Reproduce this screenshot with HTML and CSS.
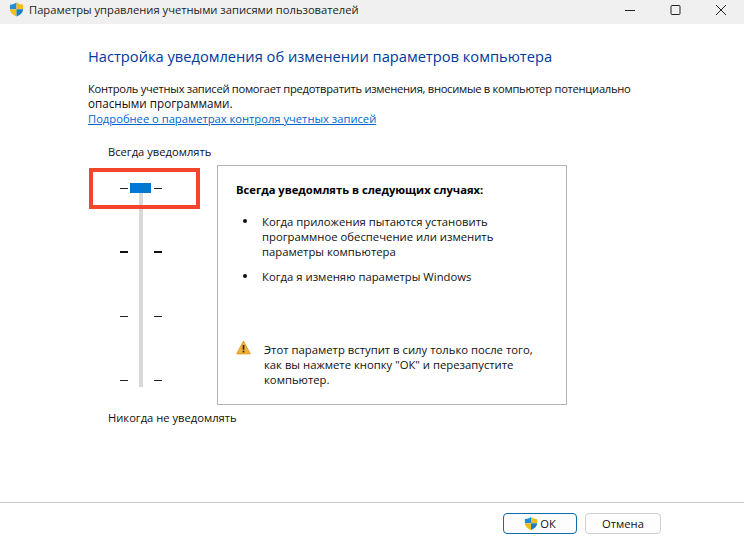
FILE: index.html
```html
<!DOCTYPE html>
<html lang="ru">
<head>
<meta charset="utf-8">
<title>Параметры управления учетными записями пользователей</title>
<link rel="stylesheet" href="styles.css">
</head>
<body>
<svg class="defs" width="0" height="0" aria-hidden="true">
  <symbol id="shield" viewBox="0 0 16 16">
    <path d="M8 .6C6 2 4 2.700 1 2.900v4.900h7V.6z" fill="#1c8fd6"/>
    <path d="M8 .6c2 1.400 4 2.100 7 2.300v4.900H8V.6z" fill="#f6bd1a"/>
    <path d="M1 7.800h7v7.600C3.800 13.900 1 11.300 1 7.800z" fill="#f6bd1a"/>
    <path d="M8 7.800h7c0 3.500-2.800 6.100-7 7.600V7.800z" fill="#1c7fc4"/>
  </symbol>
</svg>
<div class="window">
  <header class="titlebar">
    <svg class="title-icon"><use href="#shield"/></svg>
    <span class="title-text">Параметры управления учетными записями пользователей</span>
    <div class="controls">
      <svg class="ctl" viewBox="0 0 12 12"><path d="M0 6.500h10" /></svg>
      <svg class="ctl" viewBox="0 0 12 12"><rect x="1" y="1.500" width="9" height="9" rx="1"/></svg>
      <svg class="ctl" viewBox="0 0 12 12"><path d="M1 1l10 10M11 1L1 11"/></svg>
    </div>
  </header>
  <main class="content">
    <h1 class="heading">Настройка уведомления об изменении параметров компьютера</h1>
    <p class="intro"><span class="intro-first">Контроль учетных записей помогает предотвратить изменения, вносимые в компьютер потенциально</span> <span class="intro-second">опасными программами.</span></p>
    <a class="more" href="#">Подробнее о параметрах контроля учетных записей</a>
    <div class="settings">
      <div class="slider-col">
        <div class="slider-label top">Всегда уведомлять</div>
        <div class="slider">
          <div class="track"></div>
          <div class="thumb"></div>
          <div class="tick-row"><i></i><i></i></div>
          <div class="tick-row bold"><i></i><i></i></div>
          <div class="tick-row"><i></i><i></i></div>
          <div class="tick-row"><i></i><i></i></div>
        </div>
        <div class="slider-label bottom">Никогда не уведомлять</div>
      </div>
      <section class="panel">
        <h2 class="panel-title">Всегда уведомлять в следующих случаях:</h2>
        <ul class="panel-list">
          <li>Когда приложения пытаются установить программное обеспечение или изменить параметры компьютера</li>
          <li>Когда я изменяю параметры Windows</li>
        </ul>
        <div class="warning">
          <svg class="warn-icon" viewBox="0 0 16 16"><path d="M8 1.200 15.300 14.800H.7z" fill="#f2b035" stroke="#e09a20" stroke-linejoin="round"/><path d="M7.100 5.300h1.800v5.200H7.100zM7.100 11.500h1.800v1.700H7.100z" fill="#33291a"/></svg>
          <p>Этот параметр вступит в силу только после того, как вы нажмете кнопку "ОК" и перезапустите компьютер.</p>
        </div>
      </section>
    </div>
  </main>
  <footer class="footer">
    <button class="btn ok" type="button"><svg class="btn-icon"><use href="#shield"/></svg>ОК</button>
    <button class="btn" type="button">Отмена</button>
  </footer>
  <div class="highlight"></div>
</div>
</body>
</html>
```
FILE: styles.css
```css
* { box-sizing: border-box; }
html, body { margin: 0; padding: 0; }
body { font-family: "Open Sans", "Noto Sans", sans-serif; font-size: 11.200px; color: #111; background: #fff; }
.defs { position: absolute; }
.window { position: relative; width: 744px; height: 545px; display: flex; flex-direction: column; overflow: hidden; background: #fff; }
.titlebar { height: 24px; flex: none; background: #f0f0f0; display: flex; align-items: center; padding: 0 0 5px 9px; }
.title-icon { width: 15px; height: 15px; margin-right: 5px; }
.title-text { font-size: 11.200px; color: #222; flex: 1; white-space: nowrap; }
.controls { display: flex; width: 144px; padding-left: 25px; gap: 33px; align-items: center; }
.ctl { width: 12px; height: 12px; fill: none; stroke: #222; stroke-width: 1; }
.content { flex: 1; padding: 22px 0 0 88px; }
.heading { margin: 0 0 15px; font-size: 14.660px; font-weight: 400; line-height: 20px; color: #003a9b; white-space: nowrap; }
.intro { margin: 0; width: 600px; line-height: 15px; }
.intro-first { display: block; white-space: nowrap; letter-spacing: -0.29px; }
.intro-second { display: block; font-size: 11.700px; }
.more { display: block; line-height: 15px; color: #0066cc; }
.settings { display: flex; align-items: flex-start; margin-top: 18px; }
.slider-col { width: 109px; margin-left: 20px; flex: none; }
.slider-label { line-height: 15px; white-space: nowrap; }
.slider { position: relative; width: 42px; height: 198px; margin: 26px 0 0 12px; display: flex; flex-direction: column; justify-content: space-between; }
.track { position: absolute; left: 19px; top: 8px; width: 4px; height: 194px; background: #d9d9d9; }
.thumb { position: absolute; left: 10px; top: -2px; width: 21px; height: 10px; background: #0078d4; }
.tick-row { display: flex; justify-content: space-between; height: 6px; align-items: center; position: relative; }
.tick-row i { width: 8px; height: 1px; background: #222; }
.tick-row.bold i { height: 2px; background: #111; }
.slider-label.bottom { margin-top: 27px; }
.panel { width: 350px; height: 240px; border: 1px solid #b4b4b4; padding: 16px 18px 0; margin-top: 21px; }
.panel-title { margin: 0 0 17px; font-size: 11.200px; line-height: 15px; font-weight: 700; color: #000; }
.panel-list { margin: 0; padding: 0 0 0 26px; font-size: 11.300px; line-height: 15px; list-style: none; width: 270px; }
.panel-list li { position: relative; margin-bottom: 10px; }
.panel-list li::before { content: ""; position: absolute; left: -19px; top: 5px; width: 4px; height: 4px; border-radius: 50%; background: #111; }
.warning { display: flex; gap: 12px; margin-top: 58px; }
.warn-icon { width: 15px; height: 15px; flex: none; margin: -2px 1px 0 0; }
.warning p { margin: 0; font-size: 11.300px; line-height: 15px; width: 278px; }
.footer { flex: none; height: 43px; border-top: 1px solid #c8c8c8; display: flex; justify-content: flex-end; align-items: flex-start; gap: 8px; padding: 10px 83px 0 0; }
.btn { width: 76px; height: 21px; padding: 0; display: flex; align-items: center; justify-content: center; font: 11.200px "Open Sans", "Noto Sans", sans-serif; color: #111; background: #fdfdfd; border: 1px solid #cfcfcf; border-radius: 4px; }
.btn.ok { width: 74px; border-color: #0f6cab; }
.btn-icon { width: 14px; height: 15px; margin-right: 2px; }
.highlight { position: absolute; left: 89px; top: 168px; width: 111px; height: 41px; border: 4px solid #f4452c; }
```
